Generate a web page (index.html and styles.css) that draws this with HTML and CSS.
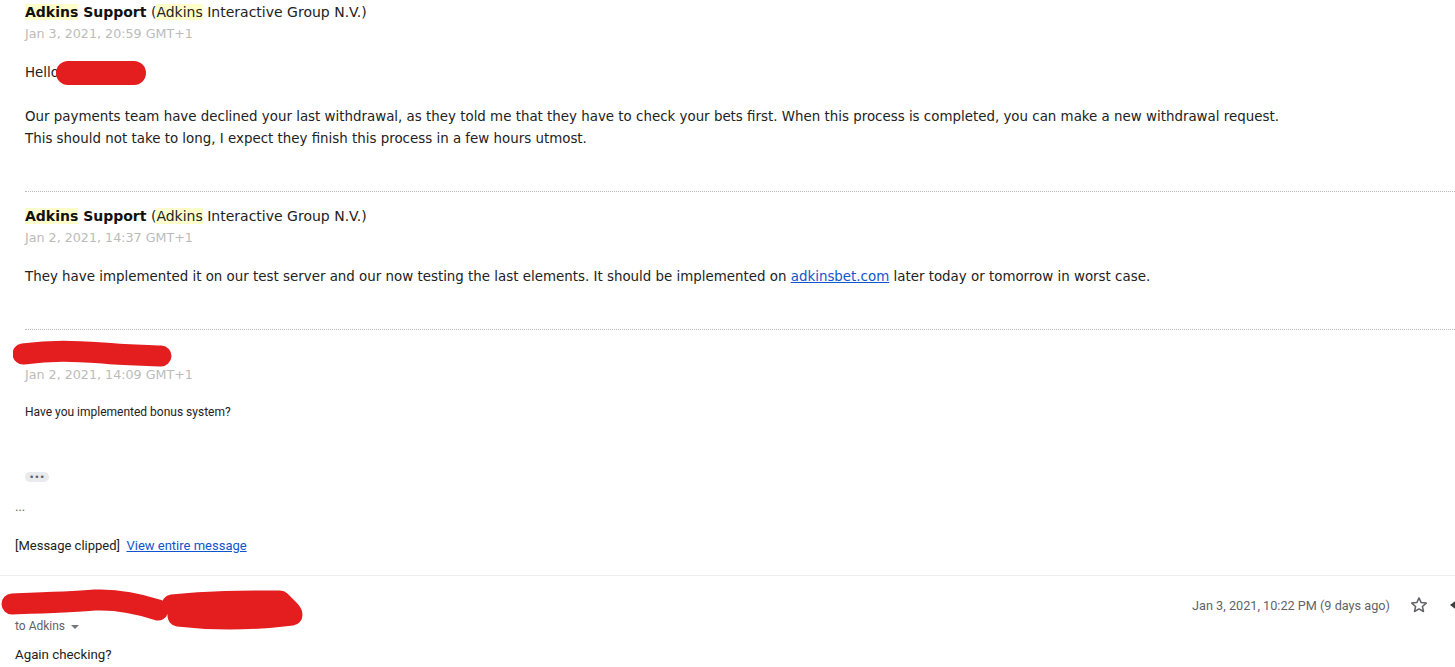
FILE: index.html
```html
<!DOCTYPE html>
<html lang="en">
<head>
    <meta charset="UTF-8">
    <title>Again checking?</title>
    <link rel="stylesheet" href="styles.css">
</head>
<body>
    <div class="quote">
        <div class="msg">
            <div class="sender"><b><span class="hl">Adkins</span> Support</b> (<span class="hl">Adkins</span> Interactive Group N.V.)</div>
            <div class="sent">Jan 3, 2021, 20:59 GMT+1</div>
            <p class="hello">Hello<span class="blob"></span></p>
            <p>Our payments team have declined your last withdrawal, as they told me that they have to check your bets first. When this process is completed, you can make a new withdrawal request.<br>This should not take to long, I expect they finish this process in a few hours utmost.</p>
        </div>
        <div class="msg">
            <div class="sender"><b><span class="hl">Adkins</span> Support</b> (<span class="hl">Adkins</span> Interactive Group N.V.)</div>
            <div class="sent">Jan 2, 2021, 14:37 GMT+1</div>
            <p>They have implemented it on our test server and our now testing the last elements. It should be implemented on <a href="#">adkinsbet.com</a> later today or tomorrow in worst case.</p>
        </div>
        <div class="msg last">
            <svg class="scribble" width="170" height="30" viewBox="0 0 170 30">
                <path d="M10 14 C40 10 60 11 90 13 C110 15 130 15 148 16" stroke="#e41d1f" stroke-width="21" stroke-linecap="round" fill="none"/>
            </svg>
            <div class="sent">Jan 2, 2021, 14:09 GMT+1</div>
            <p class="small">Have you implemented bonus system?</p>
        </div>
        <span class="dots">&bull;&bull;&bull;</span>
    </div>

    <div class="tail">
        <div class="ellipsis">...</div>
        <div class="clipped">[Message clipped]&nbsp; <a href="#">View entire message</a></div>
    </div>

    <div class="reply">
        <div class="reply-head">
            <div class="who">
                <svg class="scribble-big" width="305" height="45" viewBox="0 0 305 45">
                    <path d="M12 16 C40 15 70 14 95 12 C120 11 140 16 158 22" stroke="#e41d1f" stroke-width="21" stroke-linecap="round" fill="none"/>
                    <path d="M172 17 C210 13 240 13 280 13 C288 21 292 24 292 27 C260 31 220 33 178 28" stroke="#e41d1f" stroke-width="21" stroke-linecap="round" stroke-linejoin="round" fill="none"/>
                </svg>
                <div class="to">to Adkins <span class="caret"></span></div>
            </div>
            <div class="meta">
                <span class="date">Jan 3, 2021, 10:22 PM (9 days ago)</span>
                <svg class="star" width="20" height="20" viewBox="0 0 24 24">
                    <path d="M12 3.5l2.6 5.6 6.1.6-4.6 4.1 1.3 6-5.4-3.1-5.4 3.1 1.3-6-4.6-4.1 6.1-.6z" fill="none" stroke="#5f6368" stroke-width="1.8" stroke-linejoin="round"/>
                </svg>
                <svg class="arrow" width="14" height="20" viewBox="0 0 14 20">
                    <path d="M2 10 L10 4 L10 16 Z" fill="#3c4043"/>
                </svg>
            </div>
        </div>
        <div class="body-text">Again checking?</div>
    </div>
</body>
</html>
```

FILE: styles.css
```css
body {
    margin: 0;
    background: #fff;
    color: #222;
    font-family: Roboto, Arial, sans-serif;
    overflow: hidden;
}
.quote {
    padding-left: 25px;
    font-family: "DejaVu Sans", Verdana, sans-serif;
    font-size: 13.4px;
    color: #222;
}
.msg {
    border-bottom: 1px dotted #bbb;
    padding-top: 1px;
    padding-bottom: 41px;
    margin-bottom: 12px;
}
.msg.last {
    border-bottom: none;
    padding-bottom: 0;
    margin-bottom: 0;
}
.sender {
    font-size: 14px;
    line-height: 22px;
}
.sender b {
    color: #111;
}
.hl {
    background: #ffffcc;
}
.sent {
    color: #bbb;
    font-size: 12.7px;
    line-height: 22px;
}
.msg p {
    margin: 17px 0 0;
    line-height: 22px;
}
.msg p.hello {
    margin-top: 16px;
    margin-bottom: 21px;
}
.blob {
    display: inline-block;
    width: 90px;
    height: 24px;
    border-radius: 12px;
    background: #e41d1f;
    vertical-align: middle;
    margin-left: -3px;
}
a {
    color: #1155cc;
    text-decoration: underline;
}
.msg p.small {
    font-family: Roboto, Arial, sans-serif;
    font-size: 12px;
    margin-top: 15px;
}
.scribble {
    display: block;
    margin: -3px 0 -6px -12px;
}
.dots {
    display: block;
    width: fit-content;
    height: 10px;
    margin-top: 49px;
    background: #e8eaed;
    color: #5f6368;
    border-radius: 5px;
    font-size: 9px;
    line-height: 10px;
    padding: 0 4px;
}
.tail {
    padding-left: 15px;
    font-size: 13px;
    color: #222;
}
.ellipsis {
    margin-top: 16px;
    line-height: 18px;
    color: #666;
}
.clipped {
    margin-top: 21px;
    line-height: 18px;
}
.reply {
    border-top: 1px solid #eee;
    margin-top: 20px;
    padding-left: 15px;
}
.reply-head {
    display: flex;
    justify-content: space-between;
    align-items: flex-start;
}
.who {
    position: relative;
    padding-top: 40px;
}
.scribble-big {
    position: absolute;
    left: -15px;
    top: 12px;
}
.to {
    font-size: 12px;
    color: #5f6368;
    line-height: 20px;
}
.caret {
    display: inline-block;
    width: 0;
    height: 0;
    border-left: 4px solid transparent;
    border-right: 4px solid transparent;
    border-top: 4px solid #777;
    vertical-align: middle;
    margin-left: 3px;
}
.meta {
    display: flex;
    align-items: center;
    gap: 19px;
    padding-top: 19px;
    margin-right: -7px;
}
.date {
    font-size: 12.7px;
    color: #5f6368;
}
.star {
    display: block;
}
.arrow {
    display: block;
}
.body-text {
    font-size: 13.3px;
    color: #222;
    margin-top: 11px;
}
```
